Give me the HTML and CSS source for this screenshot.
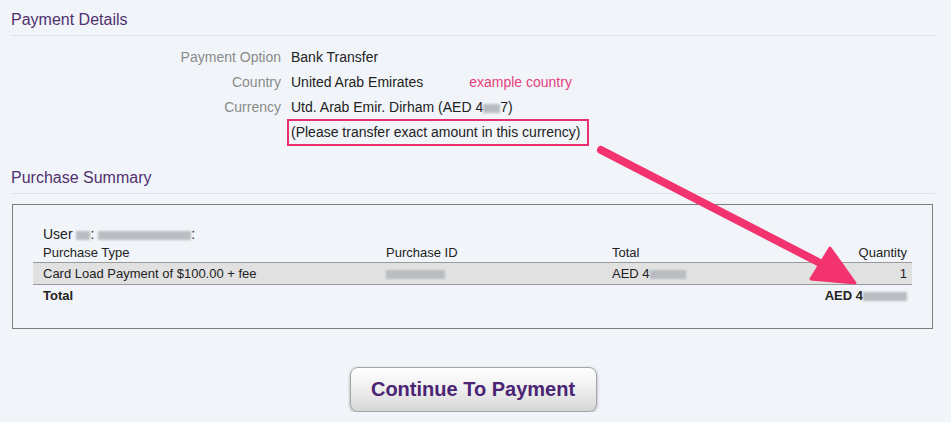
FILE: index.html
```html
<!DOCTYPE html>
<html lang="en">
<head>
    <meta charset="UTF-8">
    <title>Payment Details</title>
    <link rel="stylesheet" href="styles.css">
</head>
<body>
    <div id="page">
        <h2 class="heading">Payment Details</h2>
        <div class="details">
            <div class="label">Payment Option</div>
            <div class="value">Bank Transfer</div>
            <div class="label">Country</div>
            <div class="value">United Arab Emirates <span class="remark">example country</span></div>
            <div class="label">Currency</div>
            <div class="value">
                <div>Utd. Arab Emir. Dirham (AED 4<span class="blur w-cur"></span>7)</div>
                <span class="note">(Please transfer exact amount in this currency)</span>
            </div>
        </div>

        <h2 class="heading second">Purchase Summary</h2>
        <div class="summary">
            <div class="user">User <span class="blur w-uid"></span>: <span class="blur w-name"></span>:</div>
            <table class="items">
                <colgroup>
                    <col class="c-type">
                    <col class="c-id">
                    <col class="c-total">
                    <col>
                </colgroup>
                <tr class="head">
                    <td>Purchase Type</td>
                    <td>Purchase ID</td>
                    <td>Total</td>
                    <td class="num">Quantity</td>
                </tr>
                <tr class="item">
                    <td>Card Load Payment of $100.00 + fee</td>
                    <td><span class="blur w-id"></span></td>
                    <td>AED 4<span class="blur w-amt"></span></td>
                    <td class="num">1</td>
                </tr>
                <tr class="sum">
                    <td>Total</td>
                    <td></td>
                    <td></td>
                    <td class="num">AED 4<span class="blur w-sum"></span></td>
                </tr>
            </table>
        </div>

        <div class="actions">
            <button class="pay">Continue To Payment</button>
        </div>
    </div>

    <svg class="arrow" width="951" height="422" viewBox="0 0 951 422">
        <line x1="601" y1="150" x2="822" y2="264" stroke="#f2336f" stroke-width="8" stroke-linecap="round"/>
        <polygon points="855,283 811,279 830,248" fill="#f2336f" stroke="#f2336f" stroke-width="3" stroke-linejoin="round"/>
    </svg>
</body>
</html>
```

FILE: styles.css
```css
body, html {
    margin: 0;
    padding: 0;
    background: #f1f5f9;
    font-family: "Liberation Sans", Arial, sans-serif;
    font-size: 14px;
    color: #222;
}
#page {
    width: 924px;
    margin-left: 11px;
}
.heading {
    margin: 0;
    padding-top: 10px;
    padding-bottom: 5px;
    font-size: 16px;
    line-height: 20px;
    font-weight: normal;
    color: #50306f;
    border-bottom: 1px solid #dfe3e8;
}
.heading.second {
    margin-top: 12px;
}
.details {
    display: grid;
    grid-template-columns: 270px 1fr;
    column-gap: 10px;
    margin-top: 9px;
    line-height: 25px;
}
.label {
    text-align: right;
    color: #8a8a8a;
}
.remark {
    margin-left: 42px;
    color: #e8407c;
}
.note {
    display: inline-block;
    margin-top: -2px;
    margin-left: -4px;
    padding: 2px 7px 2px 2px;
    line-height: 19px;
    border: 2px solid #e9306c;
}
.blur {
    display: inline-block;
    height: 9px;
    vertical-align: -1px;
    background: #b9bcc0;
    filter: blur(1px);
}
.w-cur { width: 17px; }
.w-uid { width: 14px; }
.w-name { width: 93px; }
.w-id { width: 59px; }
.w-amt { width: 36px; }
.w-sum { width: 44px; }
.summary {
    margin-top: 10px;
    margin-left: 1px;
    width: 879px;
    padding: 21px 20px 23px 20px;
    border: 1px solid #7a7d80;
    font-size: 13px;
}
.user {
    font-size: 14px;
    line-height: 16px;
    padding-left: 10px;
}
.items {
    width: 879px;
    border-collapse: collapse;
}
.c-type { width: 343px; }
.c-id { width: 226px; }
.c-total { width: 200px; }
.items td {
    padding: 0 0 0 10px;
    white-space: nowrap;
}
.items td.num {
    text-align: right;
    padding-right: 5px;
}
.head td {
    height: 20px;
}
.item td {
    height: 21px;
    background: #e1e1e1;
    border-top: 1px solid #9a9a9a;
    border-bottom: 1px solid #9a9a9a;
}
.sum td {
    height: 20px;
    font-weight: bold;
}
.actions {
    display: flex;
    justify-content: center;
    margin-top: 38px;
}
.pay {
    width: 247px;
    height: 45px;
    font-family: "Liberation Sans", Arial, sans-serif;
    font-size: 20px;
    font-weight: bold;
    color: #4b2474;
    background: linear-gradient(to bottom, #ffffff, #f0f0f0 45%, #d6d6d6);
    border: 1px solid #a5a5a5;
    border-radius: 8px;
    box-shadow: 0 1px 3px rgba(0, 0, 0, 0.35);
    cursor: pointer;
}
.arrow {
    position: absolute;
    top: 0;
    left: 0;
    pointer-events: none;
}
```
